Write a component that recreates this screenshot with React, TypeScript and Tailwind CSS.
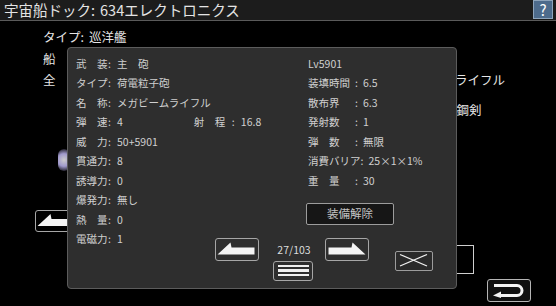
import React from "react";

const txt = "text-[#d0d0d0]";

function LRow({ label, value, extra }: { label: string; value: string; extra?: React.ReactNode }) {
  return (
    <div className="flex h-[19.5px] items-center leading-none">
      <span className="w-[32px] shrink-0 whitespace-pre">{label}</span>
      <span className="w-[9px] shrink-0">:</span>
      <span className="whitespace-pre">{value}</span>
      {extra}
    </div>
  );
}

function RRow({ label, value }: { label: string; value: string }) {
  return (
    <div className="flex h-[19.5px] items-center leading-none">
      <span className="min-w-[47px] shrink-0 whitespace-pre">{label}</span>
      <span className="w-[8px] shrink-0">:</span>
      <span className="whitespace-pre">{value}</span>
    </div>
  );
}

function ArrowLeftBtn() {
  return (
    <div className="w-[44px] h-[23px] shrink-0 border-[1.5px] border-[#a6a6a6] rounded-[3px] bg-[#2e2e2e]">
      <svg width="41" height="20" viewBox="0 0 41 20" className="block">
        <polygon points="1.5,15.5 14.5,3.5 15.5,8.5 38.5,8.5 38.5,15.5" fill="#f4f4f4" />
      </svg>
    </div>
  );
}

function ArrowRightBtn() {
  return (
    <div className="w-[44px] h-[23px] shrink-0 border-[1.5px] border-[#a6a6a6] rounded-[3px] bg-[#2e2e2e]">
      <svg width="41" height="20" viewBox="0 0 41 20" className="block">
        <polygon points="39.5,15.5 26.5,3.5 25.5,8.5 2.5,8.5 2.5,15.5" fill="#f4f4f4" />
      </svg>
    </div>
  );
}

export default function App() {
  return (
    <div className="relative w-[556px] h-[306px] overflow-hidden bg-black font-['Noto_Sans_CJK_JP',sans-serif]">
      {/* header */}
      <div className="flex h-[21px] items-center justify-between border-b-[1.5px] border-[#5a5a5a] bg-[#1c1c1c] pl-[4px] pr-[3px]">
        <span className="text-[14.5px] leading-none text-[#e4e4e4] whitespace-pre">
          宇宙船ドック:<span className="ml-[5px]">634エレクトロニクス</span>
        </span>
        <div className="flex h-[19px] w-[20px] items-center justify-center self-start border border-[#8ea4bb] bg-[#4d6b8c] text-[15px] leading-none text-white">
          ?
        </div>
      </div>

      {/* background body */}
      <div className="flex">
        <div className="w-[456px] shrink-0 pl-[35px] text-[12.5px] text-[#e6e6e6]">
          <div className="pl-[8px] pt-[5px] leading-[21.5px]">
            <div className="whitespace-pre">
              タイプ:<span className="ml-[5px]">巡洋艦</span>
            </div>
            <div>船</div>
            <div>全</div>
          </div>
          <div className="ml-[23px] mt-[58px] h-[22px] w-[12px] rounded-full bg-[radial-gradient(circle,#ffffff_0%,#c8c0ff_50%,#000000_100%)] opacity-80" />
          <div className="mt-[39px] h-[22px] w-[44px] rounded-[3px] border-[1.5px] border-[#a6a6a6]">
            <svg width="41" height="19" viewBox="0 0 41 19" className="block">
              <polygon points="1.5,15 14.5,3 15.5,8 38.5,8 38.5,15" fill="#f4f4f4" />
            </svg>
          </div>
        </div>
        <div className="flex flex-col text-[12.5px] text-[#e6e6e6]">
          <div className="mt-[49px] -ml-[13px] whitespace-pre leading-[20px]">ムライフル</div>
          <div className="mt-[10px] -ml-[12px] whitespace-pre leading-[20px]">長鋼剣</div>
          <div className="mt-[125px] -ml-[40px] h-[29px] w-[58px] border-[1.5px] border-[#cfcfcf]" />
          <div className="mt-[5px] ml-[31px] h-[23px] w-[44px] rounded-[3px] border-[1.5px] border-[#b5b5b5] bg-[#111]">
            <svg width="41" height="20" viewBox="0 0 41 20" className="block">
              <path d="M6 5.5 H29 A5 5 0 0 1 29 15.5 H13" stroke="#f4f4f4" strokeWidth="3" fill="none" />
              <polygon points="5,15.5 13,11.5 13,18" fill="#f4f4f4" />
            </svg>
          </div>
        </div>
      </div>

      {/* modal */}
      <div className={`absolute left-[67px] top-[47px] flex h-[242px] w-[390px] flex-col rounded-[4px] border border-[#5c5c5c] bg-[#2e2e2e] pl-[8px] pt-[6px] text-[10.5px] ${txt}`}>
        <div className="flex">
          <div className="flex w-[232px] flex-col">
            <LRow label="武　装" value="主　砲" />
            <LRow label="タイプ" value="荷電粒子砲" />
            <LRow label="名　称" value="メガビームライフル" />
            <LRow
              label="弾　速"
              value="4"
              extra={
                <span className="ml-[71px] flex items-center">
                  <span className="w-[38px] whitespace-pre">射　程</span>
                  <span className="w-[9px]">:</span>
                  <span>16.8</span>
                </span>
              }
            />
            <LRow label="威　力" value="50+5901" />
            <LRow label="貫通力" value="8" />
            <LRow label="誘導力" value="0" />
            <LRow label="爆発力" value="無し" />
            <LRow label="熱　量" value="0" />
          </div>
          <div className="flex flex-col">
            <div className="flex h-[19.5px] items-center leading-none">Lv5901</div>
            <RRow label="装填時間" value="6.5" />
            <RRow label="散布界" value="6.3" />
            <RRow label="発射数" value="1" />
            <RRow label="弾　数" value="無限" />
            <RRow label="消費バリア" value="25×1×1%" />
            <RRow label="重　量" value="30" />
            <div className="ml-[-2px] mt-[12px] flex h-[22px] w-[88px] items-center justify-center rounded-[2px] border-[1.5px] border-[#9c9c9c] bg-[#161616] text-[11.5px] leading-none text-[#c4c4c4]">
              装備解除
            </div>
          </div>
        </div>
        <div className="flex items-start">
          <div className="w-[139px] shrink-0">
            <LRow label="電磁力" value="1" />
          </div>
          <div className="mt-[8px]">
            <ArrowLeftBtn />
          </div>
          <div className="ml-[14px] mt-[8px] flex w-[40px] flex-col items-center">
            <div className="h-[23px] pl-[2px] text-[10.5px] leading-[23px] text-[#dcdcdc]">27/103</div>
            <div className="flex h-[20px] w-[40px] flex-col items-center justify-center gap-[2px] rounded-[3px] border-[1.5px] border-[#a6a6a6] bg-[#2e2e2e]">
              <div className="h-[2.5px] w-[31px] bg-[#f0f0f0]" />
              <div className="h-[2.5px] w-[31px] bg-[#f0f0f0]" />
              <div className="h-[2.5px] w-[31px] bg-[#f0f0f0]" />
            </div>
          </div>
          <div className="ml-[12px] mt-[8px]">
            <ArrowRightBtn />
          </div>
          <div className="ml-[26px] mt-[21px] h-[20px] w-[38px] rounded-[2px] border-[1.5px] border-[#9c9c9c] bg-[#2a2a2a]">
            <svg width="35" height="17" viewBox="0 0 35 17" className="block">
              <line x1="4" y1="2.5" x2="31" y2="14" stroke="#f0f0f0" strokeWidth="1.3" />
              <line x1="31" y1="2.5" x2="4" y2="14" stroke="#f0f0f0" strokeWidth="1.3" />
            </svg>
          </div>
        </div>
      </div>
    </div>
  );
}
